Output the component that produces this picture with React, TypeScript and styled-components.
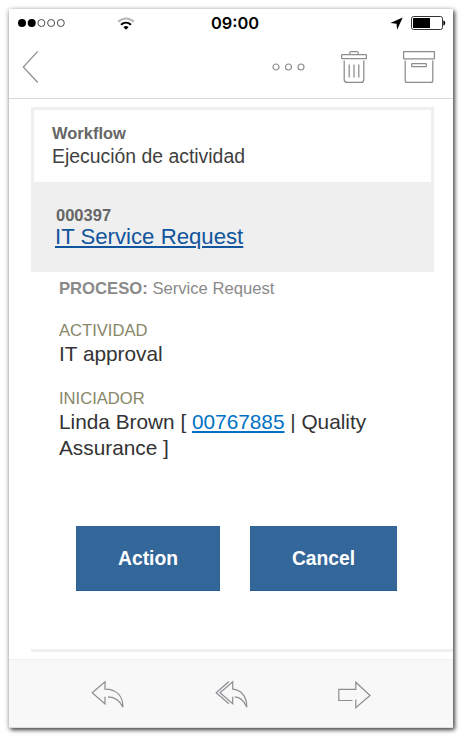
import React from "react";
import styled, { createGlobalStyle } from "styled-components";

const GlobalStyle = createGlobalStyle`
  * { box-sizing: border-box; }
  body {
    margin: 0;
    background: #fff;
    font-family: "Liberation Sans", Arial, sans-serif;
  }
`;

const Page = styled.div`
  height: 739px;
  padding: 9px 10px 11px 9px;
  overflow: hidden;
`;

const Phone = styled.main`
  display: flex;
  flex-direction: column;
  height: 719px;
  width: 444px;
  background: #fff;
  box-shadow: 2px 2px 4px rgba(0, 0, 0, 0.6), 0 1px 5px rgba(0, 0, 0, 0.35);
`;

const StatusBar = styled.header`
  display: grid;
  grid-template-columns: 99px 94px 1fr auto auto;
  align-items: center;
  height: 28px;
  padding: 0 7px 0 9px;
`;

const Clock = styled.time`
  font: 600 16.4px/28px Inter, sans-serif;
  color: #000;
`;

const Drawing = styled.svg`
  display: block;
  flex: none;
  overflow: visible;
  fill: none;
`;

const BatteryDrawing = styled(Drawing)`
  margin-left: 8px;
`;

const NavBar = styled.nav`
  display: flex;
  align-items: center;
  height: 62px;
  padding: 0 18px 2px 13px;
  border-bottom: 1px solid #d9d9d9;
  color: #8c8c91;
`;

const NavActions = styled.div`
  display: flex;
  align-items: center;
  gap: 36px;
  margin-left: auto;
`;

const Message = styled.section`
  flex: 1;
  padding: 8px 0 0 22px;
`;

const Card = styled.div`
  width: 403px;
  background: #efefef;
  padding: 3px 3px 0;
`;

const CardHead = styled.div`
  height: 72px;
  padding: 13px 18px 0;
  background: #fff;
`;

const Caption = styled.div`
  font-size: 16.5px;
  line-height: 20px;
  font-weight: bold;
  color: #666;
`;

const Title = styled.div`
  font-size: 19.4px;
  line-height: 26px;
  color: #404040;
`;

const Request = styled.div`
  height: 90px;
  padding: 23px 0 0 21px;
`;

const RequestNumber = styled(Caption)`
  padding-left: 1px;
`;

const Link = styled.a<{ $color: string }>`
  color: ${(p) => p.$color};
  text-decoration: underline;
  text-decoration-thickness: 1.5px;
  text-underline-offset: 2px;
`;

const RequestTitle = styled.div`
  font-size: 22.2px;
  line-height: 24px;
`;

const Details = styled.div`
  height: 254px;
  padding: 7px 60px 0 28px;
`;

const Process = styled.div`
  font-size: 16.65px;
  line-height: 20px;
  color: #8a8a8a;
`;

const Field = styled.div<{ $gap: number }>`
  margin-top: ${(p) => p.$gap}px;
`;

const Label = styled.div`
  font-size: 16.6px;
  line-height: 20px;
  color: #878768;
`;

const Value = styled.div`
  font-size: 20.8px;
  line-height: 26px;
  color: #333;
`;

const Buttons = styled.div`
  display: flex;
  gap: 30px;
  padding-left: 45px;
`;

const Button = styled.button<{ $width: number }>`
  width: ${(p) => p.$width}px;
  height: 65px;
  padding: 1px 0 0;
  border: 0;
  border-bottom: 1px solid #285d93;
  background: #336699;
  color: #fff;
  font: bold 19.3px/63px "Liberation Sans", Arial, sans-serif;
`;

const Divider = styled.hr`
  height: 3px;
  margin: 58px 0 0;
  border: 0;
  background: #efefef;
`;

const Footer = styled.footer`
  display: flex;
  align-items: flex-start;
  height: 69px;
  padding: 21px 82px 0 82px;
  justify-content: space-between;
  border-top: 1px solid #f0f0f0;
  border-bottom: 1px solid #dedede;
  background: #f8f8f8;
  color: #8c8c91;
`;

const Signal = () => (
  <Drawing width="48" height="10" viewBox="0 0 48 10">
    {[0, 1, 2, 3, 4].map((i) =>
      i < 2 ? (
        <circle key={i} cx={4 + i * 9.7} cy="5" r="4" fill="#000" />
      ) : (
        <circle key={i} cx={4 + i * 9.7} cy="5" r="3.5" stroke="#222" strokeWidth=".8" />
      )
    )}
  </Drawing>
);

const Wifi = () => (
  <Drawing width="18" height="13" viewBox="0 0 18 13">
    <path d="M1.2 4.8C5.5.3 12.5.3 16.8 4.8" stroke="#b8b8b8" strokeWidth="2" />
    <path d="M4 7.8c3-2.9 7-2.9 10 0" stroke="#000" strokeWidth="2" />
    <path d="M6.4 10.2c1.6-1.5 3.6-1.5 5.2 0L9 12.8z" fill="#000" />
  </Drawing>
);

const LocationArrow = () => (
  <Drawing width="13" height="13" viewBox="0 0 13 13">
    <path d="M12.7.4 7.1 12.7 6.5 6.7.3 6z" fill="#000" />
  </Drawing>
);

const Battery = () => (
  <BatteryDrawing width="35" height="14" viewBox="0 0 35 14">
    <rect x=".5" y=".5" width="31" height="13" rx="2" stroke="#333" />
    <rect x="2" y="2" width="17" height="10" fill="#000" />
    <path d="M32.3 4.5c1.1.2 1.9 1.2 1.9 2.5s-.8 2.3-1.9 2.5z" fill="#000" />
  </BatteryDrawing>
);

const Back = () => (
  <Drawing width="17" height="34" viewBox="0 0 17 34" stroke="currentColor" strokeWidth="1.2">
    <path d="M15.7 1.4 1.3 17l14.4 15.5" />
  </Drawing>
);

const More = () => (
  <Drawing width="33" height="8" viewBox="0 0 33 8" stroke="currentColor" strokeWidth="1.2">
    <circle cx="4" cy="4" r="3" />
    <circle cx="16.5" cy="4" r="3" />
    <circle cx="29" cy="4" r="3" />
  </Drawing>
);

const Trash = () => (
  <Drawing width="26" height="32" viewBox="0 0 26 32" stroke="currentColor" strokeWidth="1.25">
    <rect x=".6" y="3.6" width="24.8" height="4" rx=".6" />
    <path d="M8.8 3.5V1.6q0-1 1-1h6.4q1 0 1 1v1.9M3.2 9.5v18.9q0 3 3 3h13.6q3 0 3-3V9.5M8.2 13.5v13M13 13.5v13M17.8 13.5v13" />
  </Drawing>
);

const Archive = () => (
  <Drawing width="32" height="32" viewBox="0 0 32 32" stroke="currentColor" strokeWidth="1.25">
    <rect x=".6" y=".6" width="30.8" height="7.2" rx=".3" />
    <path d="M2.2 9.5v19.9q0 2 2 2h23.6q2 0 2-2V9.5" />
    <rect x="8.7" y="12.7" width="14.6" height="2.9" rx=".4" />
  </Drawing>
);

const Reply = () => (
  <Drawing width="34" height="28" viewBox="0 0 34 28" stroke="currentColor" strokeWidth="1.2">
    <path d="M17 15.9c7.8.3 11.8 3.5 14.9 10.3C31.9 14.9 25.5 8.4 14 8.2V.8L1.2 11.8 14 22.9v-7.2" />
  </Drawing>
);

const ReplyAll = () => (
  <Drawing width="34" height="28" viewBox="0 0 34 28" stroke="currentColor" strokeWidth="1.2">
    <path d="M13.9.5 1.2 11.8l12.7 11" />
    <path d="M19.8 15.9c6 .3 9.3 4 12 10.3 0-10.6-5.5-17.3-14.1-18V.8L5 11.8l12.7 11v-7" />
  </Drawing>
);

const Forward = () => (
  <Drawing width="33" height="28" viewBox="0 0 33 28" stroke="currentColor" strokeWidth="1.2">
    <path d="M14.5 19.5H.8V8.3h17V1.2L32 14.5 17.8 26.7V18.5" />
  </Drawing>
);

export default function App() {
  return (
    <>
      <GlobalStyle />
      <Page>
        <Phone>
          <StatusBar>
            <Signal />
            <Wifi />
            <Clock>09:00</Clock>
            <LocationArrow />
            <Battery />
          </StatusBar>
          <NavBar>
            <Back />
            <NavActions>
              <More />
              <Trash />
              <Archive />
            </NavActions>
          </NavBar>
          <Message>
            <Card>
              <CardHead>
                <Caption>Workflow</Caption>
                <Title>Ejecución de actividad</Title>
              </CardHead>
              <Request>
                <RequestNumber>000397</RequestNumber>
                <RequestTitle>
                  <Link $color="#10559d">IT Service Request</Link>
                </RequestTitle>
              </Request>
            </Card>
            <Details>
              <Process>
                <b>PROCESO:</b> Service Request
              </Process>
              <Field $gap={22}>
                <Label>ACTIVIDAD</Label>
                <Value>IT approval</Value>
              </Field>
              <Field $gap={22}>
                <Label>INICIADOR</Label>
                <Value>
                  Linda Brown [ <Link $color="#0072c6">00767885</Link> | Quality
                  <br />
                  Assurance ]
                </Value>
              </Field>
            </Details>
            <Buttons>
              <Button $width={144}>Action</Button>
              <Button $width={147}>Cancel</Button>
            </Buttons>
            <Divider />
          </Message>
          <Footer>
            <Reply />
            <ReplyAll />
            <Forward />
          </Footer>
        </Phone>
      </Page>
    </>
  );
}
